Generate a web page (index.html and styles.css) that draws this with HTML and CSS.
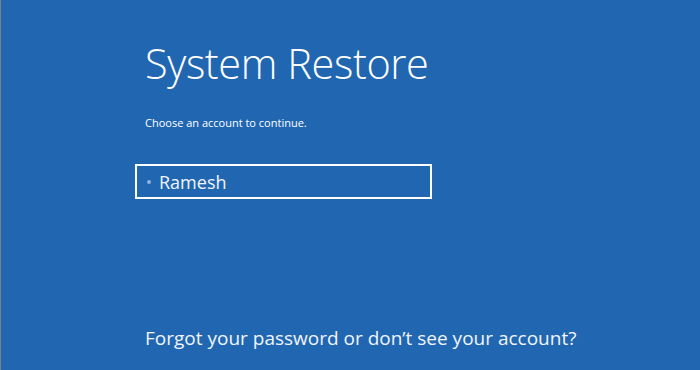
FILE: index.html
```html
<!DOCTYPE html>
<html lang="en">
<head>
    <meta charset="UTF-8">
    <title>System Restore</title>
    <link rel="stylesheet" href="styles.css">
</head>
<body>
    <div class="screen">
        <div class="content">
            <h1>System Restore</h1>
            <p class="prompt">Choose an account to continue.</p>
            <div class="account">
                <span class="dot"></span>
                <span class="name">Ramesh</span>
            </div>
        </div>
        <a class="forgot">Forgot your password or don’t see your account?</a>
    </div>
</body>
</html>
```

FILE: styles.css
```css
body {
    margin: 0;
    font-family: "Open Sans", "Noto Sans", sans-serif;
    background-color: #2166b1;
}
.screen {
    height: 370px;
    box-sizing: border-box;
    border-left: 1px solid #808080;
    background-color: #2166b1;
    color: white;
    display: flex;
    flex-direction: column;
    padding-left: 134px;
}
.content {
    flex: 1;
}
h1 {
    font-weight: 300;
    font-size: 41.5px;
    letter-spacing: -0.4px;
    margin: 35px 0 0 10px;
    line-height: 56px;
}
.prompt {
    font-size: 11px;
    margin: 24px 0 0 10px;
}
.account {
    width: 293px;
    height: 31px;
    border: 2px solid white;
    margin-top: 34px;
    display: flex;
    align-items: center;
}
.dot {
    width: 4px;
    height: 4px;
    border-radius: 50%;
    background: #8fb4dd;
    margin-left: 10px;
    margin-right: 8px;
}
.name {
    font-size: 18px;
    color: #f0f5fb;
}
.forgot {
    font-size: 19px;
    margin: 0 0 19px 10px;
    color: #f0f5fb;
}
```
